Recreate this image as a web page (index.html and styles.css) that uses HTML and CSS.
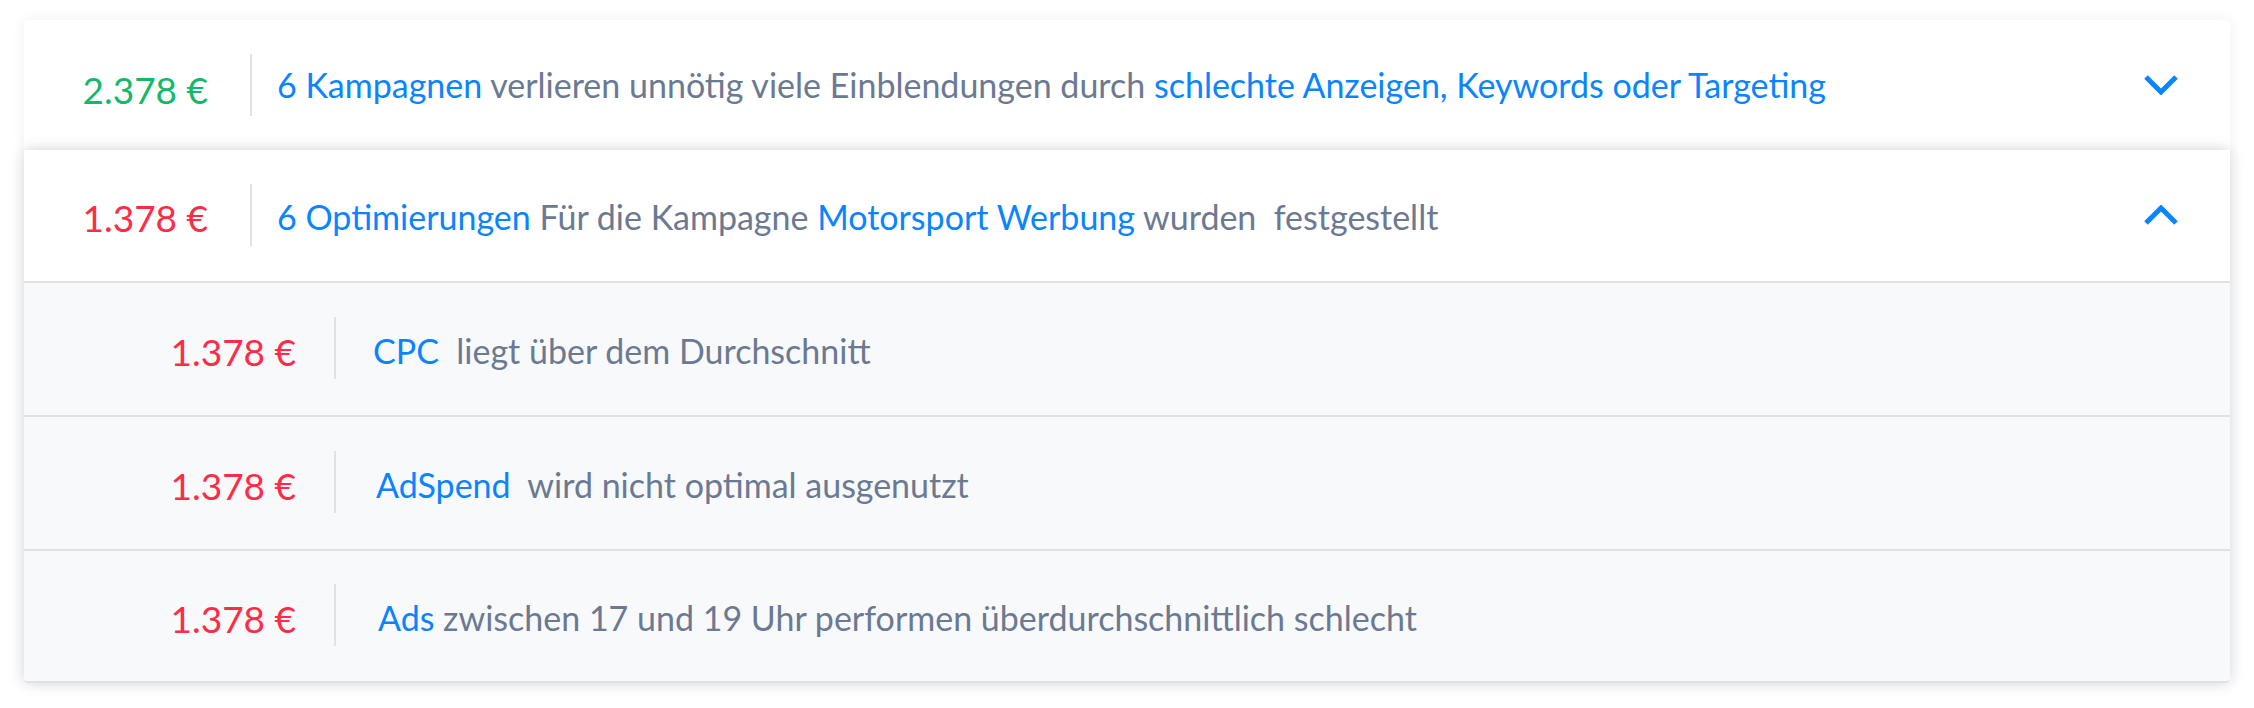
FILE: index.html
```html
<!DOCTYPE html>
<html lang="de">
<head>
<meta charset="utf-8">
<title>Optimierungen</title>
<link rel="stylesheet" href="styles.css">
</head>
<body>
<div class="page">
  <section class="card card-first">
    <div class="row head-row">
      <div class="amount amount-head positive low">2.378 €</div>
      <div class="divider head-divider"></div>
      <p class="text"><span class="hl">6 Kampagnen</span> verlieren unnötig viele Einblendungen durch <span class="hl">schlechte Anzeigen, Keywords oder Targeting</span></p>
      <svg class="chevron" width="34" height="20" viewBox="0 0 34 20"><path d="M2 2 L17 17 L32 2" fill="none" stroke="#0a84ff" stroke-width="5"/></svg>
    </div>
  </section>
  <section class="card card-second">
    <div class="row head-row head-open">
      <div class="amount amount-head negative">1.378 €</div>
      <div class="divider head-divider"></div>
      <p class="text"><span class="hl">6 Optimierungen</span> Für die Kampagne <span class="hl">Motorsport Werbung</span> wurden&nbsp; festgestellt</p>
      <svg class="chevron" width="34" height="20" viewBox="0 0 34 20"><path d="M2 18 L17 3 L32 18" fill="none" stroke="#0a84ff" stroke-width="5"/></svg>
    </div>
    <div class="row sub-row">
      <div class="amount amount-sub negative">1.378 €</div>
      <div class="divider sub-divider"></div>
      <p class="text"><span class="hl">CPC</span>&nbsp; liegt über dem Durchschnitt</p>
    </div>
    <div class="row sub-row">
      <div class="amount amount-sub negative">1.378 €</div>
      <div class="divider sub-divider"></div>
      <p class="text text-indent"><span class="hl">AdSpend</span>&nbsp; wird nicht optimal ausgenutzt</p>
    </div>
    <div class="row sub-row">
      <div class="amount amount-sub negative">1.378 €</div>
      <div class="divider sub-divider"></div>
      <p class="text text-indent2"><span class="hl">Ads</span> zwischen 17 und 19 Uhr performen überdurchschnittlich schlecht</p>
    </div>
  </section>
</div>
</body>
</html>
```

FILE: styles.css
```css
html, body {
  margin: 0;
  padding: 0;
  background: #ffffff;
}

body {
  font-family: "Lato", "Noto Sans", sans-serif;
  -webkit-font-smoothing: antialiased;
}

.page {
  padding: 20px 24px 20px 24px;
}

.card {
  background: #ffffff;
  border-radius: 5px;
  box-shadow: 0 0 14px rgba(30, 40, 70, 0.07);
}

.card-first {
  border-radius: 5px 5px 0 0;
}

.card-second {
  position: relative;
  border-radius: 0 0 4px 4px;
  box-shadow: 0 -8px 14px rgba(30, 40, 70, 0.035), 0 4px 14px rgba(30, 40, 70, 0.07), 6px 0 12px rgba(30, 40, 70, 0.05), -6px 0 12px rgba(30, 40, 70, 0.05);
}

.row {
  display: flex;
  align-items: center;
}

.head-row {
  height: 130px;
  padding-right: 52px;
}

.head-open {
  height: 127px;
  padding-top: 4px;
  border-bottom: 2px solid #dfe1e8;
}

.sub-row {
  height: 128px;
  padding-top: 4px;
  background: #f8f9fb;
  border-bottom: 2px solid #dfe1e8;
}

.sub-row:last-child {
  height: 126px;
  border-radius: 0 0 4px 4px;
}

.amount {
  flex: none;
  text-align: right;
  font-size: 37px;
  line-height: 1;
  white-space: nowrap;
}

.amount-head {
  width: 184px;
}

.amount-sub {
  width: 272px;
}

.low {
  padding-top: 8px;
}

.positive {
  color: #12b96b;
}

.negative {
  color: #ff2b47;
}

.divider {
  flex: none;
  width: 2px;
  height: 62px;
  background: #dfe2e8;
}

.head-open .divider,
.sub-row .divider {
  margin-top: -6px;
}

.head-divider {
  margin-left: 42px;
  margin-right: 25px;
}

.sub-divider {
  margin-left: 38px;
  margin-right: 37px;
}

.text {
  flex: 1;
  margin: 0;
  font-size: 34px;
  line-height: 1.2;
  color: #6b7992;
  white-space: nowrap;
}

.text-indent {
  padding-left: 3px;
}

.text-indent2 {
  padding-left: 5px;
}

.hl {
  color: #0a84ff;
}

.chevron {
  flex: none;
  display: block;
}

.head-open .chevron {
  margin-top: -6px;
}
```
